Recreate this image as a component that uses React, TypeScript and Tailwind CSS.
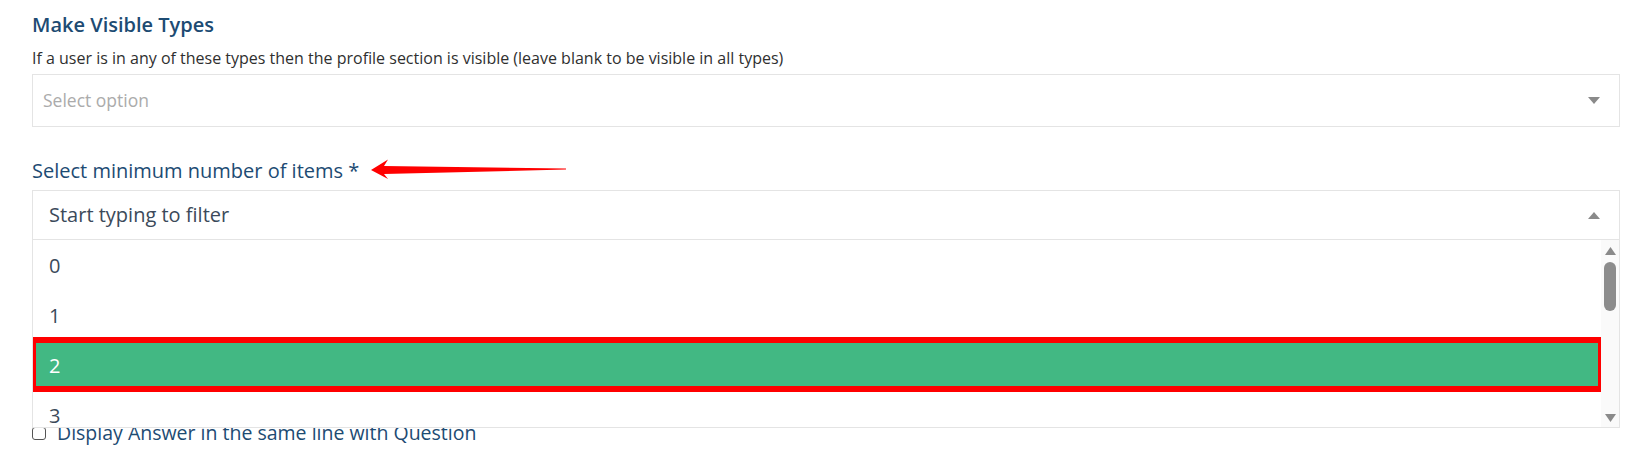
import React from 'react';

const options = ['0', '1', '2', '3'];

const Caret: React.FC<{ up?: boolean }> = ({ up }) => (
  <svg width="12" height="7" viewBox="0 0 12 7" className="shrink-0">
    {up ? <polygon points="0,7 12,7 6,0" fill="#8a8a8a" /> : <polygon points="0,0 12,0 6,7" fill="#8a8a8a" />}
  </svg>
);

const App: React.FC = () => {
  const selected = '2';

  return (
    <div className="min-h-screen bg-white px-[32px] pt-[11px] font-['Open_Sans',sans-serif]">
      {/* Visible types */}
      <h3 className="text-[20px] leading-[28px] font-semibold text-[#1d4b73]">Make Visible Types</h3>
      <p className="mt-[9px] text-[16px] leading-[20px] text-[#2f2f2f]">
        If a user is in any of these types then the profile section is visible (leave blank to be visible in all types)
      </p>
      <div className="mt-[6px] flex h-[53px] items-center justify-between border border-[#e4e4e4] pl-[10px] pr-[19px]">
        <span className="text-[17.5px] text-[#ababab]">Select option</span>
        <Caret />
      </div>

      {/* Minimum items */}
      <div className="mt-[30px] flex items-center">
        <label className="text-[20px] leading-[28px] font-medium text-[#1d4b73]">Select minimum number of items *</label>
        <svg width="200" height="24" viewBox="0 0 200 24" className="ml-[12px]">
          <polygon
            points="0,11 17,0.5 13,7 195,9.5 195,10.5 13,15 17,20"
            fill="#ff0000"
          />
        </svg>
      </div>

      <div className="relative mt-[5px]">
        <div className="flex h-[50px] items-center justify-between border border-[#e4e4e4] pl-[16px] pr-[19px]">
          <span className="text-[20px] text-[#3b4a5a]">Start typing to filter</span>
          <Caret up />
        </div>

        {/* Dropdown menu */}
        <div className="absolute left-0 right-0 top-full z-10 flex h-[188px] border border-t-0 border-[#e4e4e4] bg-white">
          <ul className="flex-1 overflow-hidden pt-[1px]">
            {options.map((o) => (
              <li
                key={o}
                className={`relative flex h-[50px] shrink-0 items-center pl-[16px] text-[20px] ${
                  o === selected ? 'bg-[#42b883] text-white' : 'text-[#3b4a5a]'
                }`}
              >
                {o}
                {o === selected && (
                  <span className="pointer-events-none absolute -left-[3px] -right-[3px] -top-[4px] -bottom-[1px] border-[6px] border-[#ff0000]" />
                )}
              </li>
            ))}
          </ul>
          {/* Scrollbar */}
          <div className="flex w-[18px] flex-col items-center bg-[#fafafa] pt-[7px] pb-[5px]">
            <svg width="11" height="8" viewBox="0 0 11 8">
              <polygon points="0,8 11,8 5.5,0" fill="#8a8a8a" />
            </svg>
            <div className="mt-[7px] h-[49px] w-[12px] rounded-full bg-[#8c8c8c]" />
            <div className="flex-1" />
            <svg width="11" height="8" viewBox="0 0 11 8">
              <polygon points="0,0 11,0 5.5,8" fill="#8a8a8a" />
            </svg>
          </div>
        </div>
      </div>

      {/* Checkbox row under the menu */}
      <div className="mt-[180px] flex items-center">
        <span className="h-[13px] w-[14px] rounded-[3px] border border-[#555]" />
        <span className="ml-[11px] text-[19.5px] leading-[26px] text-[#1d4b73]">Display Answer in the same line with Question</span>
      </div>
    </div>
  );
};

export default App;
